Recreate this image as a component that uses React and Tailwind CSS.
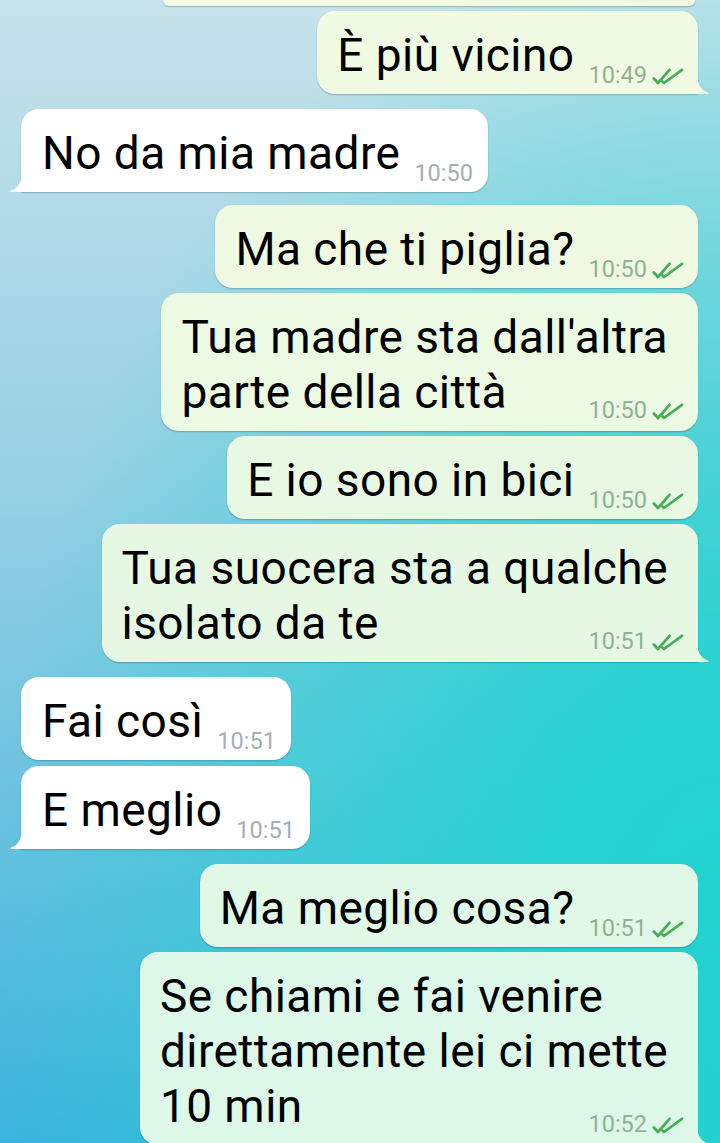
const messages = [
  { sent: true, lines: ["È più vicino"], time: "10:49", bg: "bg-[#f1fae2]", fill: "#f1fae2", tail: true, mt: "mt-[5px]" },
  { sent: false, lines: ["No da mia madre"], time: "10:50", bg: "bg-white", fill: "#ffffff", tail: true, mt: "mt-[15px]" },
  { sent: true, lines: ["Ma che ti piglia?"], time: "10:50", bg: "bg-[#eff9e2]", fill: "#eff9e2", mt: "mt-[13px]" },
  { sent: true, lines: ["Tua madre sta dall'altra", "parte della città"], time: "10:50", bg: "bg-[#ecf9e3]", fill: "#ecf9e3", mt: "mt-[5px]" },
  { sent: true, lines: ["E io sono in bici"], time: "10:50", bg: "bg-[#e9f8e3]", fill: "#e9f8e3", mt: "mt-[5px]" },
  { sent: true, lines: ["Tua suocera sta a qualche", "isolato da te"], time: "10:51", bg: "bg-[#e6f8e4]", fill: "#e6f8e4", tail: true, mt: "mt-[5px]" },
  { sent: false, lines: ["Fai così"], time: "10:51", bg: "bg-white", fill: "#ffffff", mt: "mt-[15px]" },
  { sent: false, lines: ["E meglio"], time: "10:51", bg: "bg-white", fill: "#ffffff", tail: true, mt: "mt-[6px]" },
  { sent: true, lines: ["Ma meglio cosa?"], time: "10:51", bg: "bg-[#e1f8e7]", fill: "#e1f8e7", mt: "mt-[15px]" },
  { sent: true, lines: ["Se chiami e fai venire", "direttamente lei ci mette", "10 min"], time: "10:52", bg: "bg-[#ddf7e9]", fill: "#ddf7e9", tail: true, mt: "mt-[5px]" },
];

const Ticks = () => (
  <svg width="32" height="17" viewBox="0 0 32 17" fill="none" className="ml-[5px] translate-y-[1px]">
    <path d="M1.8 10.5 L6 15 L17.5 1.8" stroke="#45ae57" strokeWidth="2.7" strokeLinecap="round" strokeLinejoin="round" />
    <path d="M10.5 13.5 L12 15 L30 1.8" stroke="#45ae57" strokeWidth="2.7" strokeLinecap="round" strokeLinejoin="round" />
  </svg>
);

const Tail = ({ sent, fill }) =>
  sent ? (
    <svg width="12" height="20" viewBox="0 0 12 20" className="absolute bottom-0 -right-[11px]">
      <path d="M0 0 C0.5 11 4 16 11 18.6 C12.2 19.1 11.8 20 10.6 20 L0 20 Z" fill={fill} />
    </svg>
  ) : (
    <svg width="12" height="20" viewBox="0 0 12 20" className="absolute bottom-0 -left-[11px]">
      <path d="M12 0 C11.5 11 8 16 1 18.6 C-0.2 19.1 0.2 20 1.4 20 L12 20 Z" fill={fill} />
    </svg>
  );

const Meta = ({ sent, time, className }) => (
  <div className={`flex items-center ${className}`}>
    <span
      className={`text-[23.5px] leading-[22px] ${
        sent ? "text-[#8fb294]" : "text-[#a5aeb3]"
      }`}
    >
      {time}
    </span>
    {sent && <Ticks />}
  </div>
);

const Bubble = ({ m }) => {
  const multi = m.lines.length > 1;
  const corner = m.tail
    ? m.sent
      ? "rounded-[18px] rounded-br-none"
      : "rounded-[18px] rounded-bl-none"
    : "rounded-[18px]";
  const pad = m.sent ? "pl-[20px] pr-[14px]" : "pl-[21px] pr-[15px]";

  return (
    <div className={`flex ${m.sent ? "justify-end" : "justify-start"} ${m.mt}`}>
      <div
        className={`relative ${m.bg} ${corner} ${pad} pt-[17px] shadow-[0_1px_1.5px_rgba(0,50,70,0.28)] ${
          multi ? "grid pb-[11px]" : "flex items-end pb-[12px]"
        }`}
      >
        {multi ? (
          <>
            <p className="col-start-1 row-start-1 pr-[16px] whitespace-nowrap text-[46px] tracking-[0.45px] leading-[55px] text-black">
              {m.lines.map((l, i) => (
                <span key={i}>
                  {l}
                  {i < m.lines.length - 1 && <br />}
                </span>
              ))}
            </p>
            <Meta
              sent={m.sent}
              time={m.time}
              className="col-start-1 row-start-1 self-end justify-self-end translate-y-[1px]"
            />
          </>
        ) : (
          <>
            <p className="whitespace-nowrap text-[46px] tracking-[0.45px] leading-[54px] text-black">
              {m.lines[0]}
            </p>
            <Meta sent={m.sent} time={m.time} className="ml-[14px] translate-y-[4px]" />
          </>
        )}
        {m.tail && <Tail sent={m.sent} fill={m.fill} />}
      </div>
    </div>
  );
};

export default function App() {
  return (
    <div className="h-[1143px] w-[720px] overflow-hidden font-['Roboto',_'Liberation_Sans',_sans-serif] bg-[radial-gradient(ellipse_720px_1000px_at_100%_80%,rgba(34,211,208,1)_0%,rgba(34,211,208,0.9)_25%,rgba(34,211,208,0)_100%),linear-gradient(to_bottom,#c7e3eb_0%,#93cee3_45%,#3bb4dc_100%)]">
      <div className="flex flex-col pl-[21px] pr-[22px]">
        <div className="ml-auto mr-[3px] h-[6px] w-[532px] rounded-b-[18px] bg-[#f3fae4] shadow-[0_1px_1.5px_rgba(0,50,70,0.28)]" />
        {messages.map((m, i) => (
          <Bubble key={i} m={m} />
        ))}
      </div>
    </div>
  );
}
